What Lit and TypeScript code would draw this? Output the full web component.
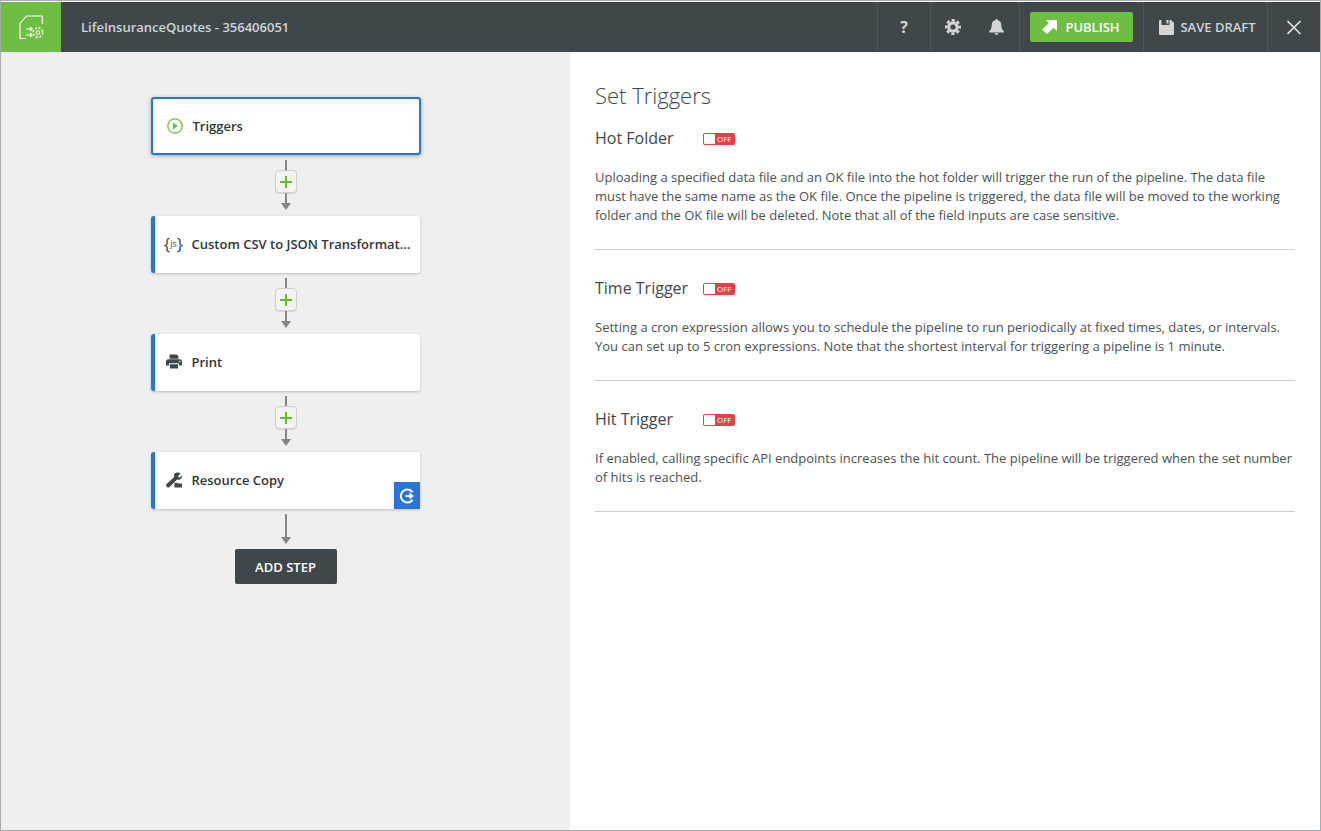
import { LitElement, html, css, svg } from "lit";
import { customElement } from "lit/decorators.js";

const steps = [
  { name: "Custom CSV to JSON Transformation", icon: "js" },
  { name: "Print", icon: "print" },
  { name: "Resource Copy", icon: "wrench", badge: true },
];

const sections = [
  {
    title: "Hot Folder",
    text: "Uploading a specified data file and an OK file into the hot folder will trigger the run of the pipeline. The data file must have the same name as the OK file. Once the pipeline is triggered, the data file will be moved to the working folder and the OK file will be deleted. Note that all of the field inputs are case sensitive.",
  },
  {
    title: "Time Trigger",
    text: "Setting a cron expression allows you to schedule the pipeline to run periodically at fixed times, dates, or intervals. You can set up to 5 cron expressions. Note that the shortest interval for triggering a pipeline is 1 minute.",
  },
  {
    title: "Hit Trigger",
    text: "If enabled, calling specific API endpoints increases the hit count. The pipeline will be triggered when the set number of hits is reached.",
  },
];

const icons: Record<string, any> = {
  print: svg`<svg width="16" height="15" viewBox="0 0 18 16"><path fill="#40474b" d="M4 0h8l2 2v3H4zM2.500 5.500h13A2.500 2.500 0 0 1 18 8v4.500h-3.500V10h-11v2.500H0V8a2.500 2.500 0 0 1 2.500-2.500zM4.500 11h9v5h-9z"/><circle cx="15.500" cy="8" r=".9" fill="#fff"/></svg>`,
  wrench: svg`<svg width="16" height="16" viewBox="0 0 18 17"><path fill="#40474b" d="M16.500 1.200 13.700 4l.5 1.400 1.500.4 2.200-2.400c.3 2-.6 3.800-2.400 4.500-1.100.4-2.100.3-3-.1L4 16.300c-.8.800-2 .8-2.800 0L.7 15.800c-.8-.8-.8-2 0-2.800L9.300 5c-.4-1-.4-2.100.1-3.200C10.400-.2 14.600-.5 16.500 1.200z"/><path fill="#40474b" d="M9.500 11.500h3l1 1H18V17H9.500z"/></svg>`,
  js: html`<span class="js"><span class="brace">{</span><span class="jsname">js</span><span class="brace">}</span></span>`,
};

@customElement("app-root")
export class AppRoot extends LitElement {
  static styles = css`
    :host {
      display: block;
      height: 831px;
      font-family: "Open Sans", "Liberation Sans", sans-serif;
      color: #40474b;
    }
    .frame {
      box-sizing: border-box;
      height: 831px;
      border: 1px solid #a9acae;
      display: flex;
      flex-direction: column;
      background: #fff;
    }
    header {
      height: 50px;
      margin-top: 1px;
      flex: none;
      background: #40474b;
      display: flex;
      align-items: stretch;
      color: #cdd5da;
    }
    .logo {
      width: 60px;
      background: #6fbe44;
      display: flex;
      align-items: center;
      justify-content: center;
    }
    .app-title {
      flex: 1;
      padding-left: 20px;
      font-size: 13px;
      font-weight: 600;
      line-height: 50px;
    }
    .cell {
      border-left: 1px solid #50575b;
      display: flex;
      align-items: center;
      justify-content: center;
      box-sizing: border-box;
    }
    .help {
      width: 53px;
      font-size: 16px;
      font-weight: 700;
      color: #d4d4d4;
    }
    .tools {
      width: 89px;
      gap: 28px;
      padding-right: 1px;
    }
    .pub-cell {
      width: 124px;
    }
    .publish {
      width: 103px;
      height: 30px;
      background: #6fbe44;
      border-radius: 2px;
      color: #fff;
      font-size: 13px;
      font-weight: 600;
      display: flex;
      align-items: center;
      justify-content: center;
      gap: 8px;
      padding-right: 1px;
      box-sizing: border-box;
    }
    .draft {
      width: 124px;
      gap: 6px;
      padding-left: 4px;
      font-size: 13px;
      font-weight: 600;
      color: #cdd5da;
    }
    .close {
      width: 53px;
    }
    main {
      flex: 1;
      display: flex;
      min-height: 0;
    }
    .flow {
      width: 569px;
      flex: none;
      box-sizing: border-box;
      background: #efefef;
      padding-top: 45px;
      display: flex;
      flex-direction: column;
      align-items: center;
    }
    .card {
      box-sizing: border-box;
      width: 269px;
      height: 57px;
      margin: 1px 1px 0 0;
      background: #fff;
      border-radius: 3px;
      border-left: 4px solid #2b74d6;
      box-shadow: 0 1px 3px rgba(0, 0, 0, 0.22);
      display: flex;
      align-items: center;
      padding: 0 7px 2px 10px;
      position: relative;
      font-size: 13px;
      font-weight: 600;
      color: #2f3538;
    }
    .card.active {
      width: 270px;
      height: 58px;
      margin: 0;
      border: 2px solid #2b74d6;
      padding: 0 7px 0 13px;
      box-shadow: 0 1px 4px rgba(0, 0, 0, 0.3);
    }
    .ico {
      width: 18px;
      flex: none;
      margin-right: 9px;
      display: flex;
      justify-content: center;
    }
    .name {
      overflow: hidden;
      white-space: nowrap;
      text-overflow: ellipsis;
      min-width: 0;
    }
    .js {
      display: flex;
      align-items: center;
      color: #40474b;
      font-weight: 400;
    }
    .brace {
      font-size: 17px;
      font-weight: 400;
      line-height: 18px;
    }
    .jsname {
      font-size: 9px;
      line-height: 18px;
    }
    .badge {
      position: absolute;
      right: 0;
      bottom: 0;
      width: 26px;
      height: 27px;
      background: #2b74d6;
      display: flex;
      align-items: center;
      justify-content: center;
    }
    .link {
      height: 60px;
      box-sizing: border-box;
      padding: 5px 0;
      display: flex;
      flex-direction: column;
      align-items: center;
    }
    .link.last {
      height: 40px;
    }
    .line {
      width: 2px;
      background: #858585;
      flex: 1;
    }
    .head {
      width: 0;
      height: 0;
      border-left: 5px solid transparent;
      border-right: 5px solid transparent;
      border-top: 7px solid #858585;
    }
    .add {
      box-sizing: border-box;
      width: 22px;
      height: 23px;
      flex: none;
      background: #f3f3f3;
      border: 1px solid #cfcfcf;
      border-radius: 4px;
      box-shadow: 0 1px 1px rgba(0, 0, 0, 0.1);
      display: flex;
      align-items: center;
      justify-content: center;
    }
    .add-step {
      width: 102px;
      height: 35px;
      background: #40474b;
      border-radius: 2px;
      color: #fff;
      font-size: 13px;
      font-weight: 600;
      display: flex;
      align-items: center;
      justify-content: center;
    }
    .panel {
      flex: 1;
      padding: 0 25px;
    }
    h1 {
      margin: 0 0 15px;
      padding-top: 27px;
      font-size: 22px;
      font-weight: 300;
      line-height: 32px;
      color: #40474b;
    }
    section {
      border-bottom: 1px solid #cfcfcf;
      padding-bottom: 24px;
      margin-bottom: 26px;
    }
    .sec-head {
      display: flex;
      align-items: center;
      height: 24px;
      margin-bottom: 18px;
    }
    h2 {
      margin: 0;
      font-size: 16px;
      font-weight: 400;
      line-height: 24px;
      width: 108px;
      color: #40474b;
    }
    .toggle {
      box-sizing: border-box;
      width: 32px;
      height: 12px;
      background: #e5404a;
      border-radius: 2px;
      padding: 1px;
      display: flex;
      align-items: center;
      margin-top: 1px;
    }
    .knob {
      width: 11px;
      height: 10px;
      background: #fff;
      border-radius: 1px;
    }
    .off {
      color: #fff;
      font-size: 8px;
      font-weight: 400;
      line-height: 10px;
      margin-left: 2px;
    }
    p {
      margin: 0;
      font-size: 13px;
      line-height: 19px;
      color: #4a5155;
    }
  `;

  connector(last = false) {
    return html`<div class="link ${last ? "last" : ""}">
      <div class="line"></div>
      ${last
        ? ""
        : html`<div class="add">
              <svg width="12" height="12" viewBox="0 0 12 12"><path fill="#6cb52d" d="M5 0h2v5h5v2H7v5H5V7H0V5h5z" /></svg>
            </div>
            <div class="line"></div>`}
      <div class="head"></div>
    </div>`;
  }

  render() {
    return html`<div class="frame">
      <header>
        <div class="logo">
          <svg width="26" height="26" viewBox="0 0 26 26" fill="none" stroke="#fff">
            <path stroke-width="1.100" d="M8 24.500H2V9.500L8.500 2H24.300v8" />
            <path stroke-width="1.100" d="M8 15h6M12 13l2.200 2-2.200 2M8 21h6M12 19l2.200 2-2.200 2" />
            <circle cx="20" cy="18.500" r="1.800" stroke-width="1.100" />
            <circle cx="20" cy="18.500" r="4.700" stroke-width="1.500" stroke-dasharray="2 1.690" />
          </svg>
        </div>
        <div class="app-title">LifeInsuranceQuotes - 356406051</div>
        <div class="cell help">?</div>
        <div class="cell tools">
          <svg width="16" height="16" viewBox="0 0 16 16" fill="none" stroke="#d4d4d4">
            <circle cx="8" cy="8" r="4.200" stroke-width="3.200" />
            <circle cx="8" cy="8" r="6.700" stroke-width="2.600" stroke-dasharray="3.200 2.060" stroke-dashoffset="1.600" />
          </svg>
          <svg width="15" height="16" viewBox="0 0 15 16"><path fill="#d4d4d4" d="M7.500 0c.7 0 1.100.5 1.100 1.200 2.400.4 3.700 2.200 3.700 4.800 0 3.200.9 4.900 2.700 6.400v1H0v-1c1.800-1.500 2.700-3.200 2.700-6.400 0-2.600 1.300-4.400 3.700-4.800C6.400.5 6.800 0 7.500 0zM5.500 14.300h4c0 1-.9 1.700-2 1.700s-2-.7-2-1.700z" /></svg>
        </div>
        <div class="cell pub-cell">
          <div class="publish">
            <svg width="15" height="14" viewBox="0 0 15 14"><path fill="#fff" d="M4 0h11v11l-3.500-3.200L5 14 0 9.500l6.800-6.200z" /></svg>
            PUBLISH
          </div>
        </div>
        <div class="cell draft">
          <svg width="15" height="15" viewBox="0 0 15 15"><path fill="#d4d4d4" d="M1 0h1.500v5h8V0H12l3 3v11a1 1 0 0 1-1 1H1a1 1 0 0 1-1-1V1a1 1 0 0 1 1-1zM7.500 0h2v3.500h-2z" /></svg>
          SAVE DRAFT
        </div>
        <div class="cell close">
          <svg width="15" height="15" viewBox="0 0 15 15"><path stroke="#e4e4e4" stroke-width="1.600" d="M.5 1l13 13M13.500 1L.5 14" /></svg>
        </div>
      </header>
      <main>
        <div class="flow">
          <div class="card active">
            <span class="ico">
              <svg width="16" height="16" viewBox="0 0 16 16"><circle cx="8" cy="8" r="7.200" fill="none" stroke="#6fbe44" stroke-width="1.300" /><path fill="#6fbe44" d="M6 4.500 11 8l-5 3.500z" /></svg>
            </span>
            <span class="name">Triggers</span>
          </div>
          ${steps.map(
            (s) => html`${this.connector()}
              <div class="card">
                <span class="ico">${icons[s.icon]}</span>
                <span class="name">${s.name}</span>
                ${s.badge
                  ? html`<div class="badge">
                      <svg width="16" height="16" viewBox="0 0 16 16" fill="none">
                        <path stroke="#fff" stroke-width="2" d="M13.600 4.200A6.500 6.500 0 1 0 13.600 11.800" />
                        <path fill="#fff" d="M6.500 7h4V4.500L15 8l-4.500 3.500V9h-4z" />
                      </svg>
                    </div>`
                  : ""}
              </div>`
          )}
          ${this.connector(true)}
          <div class="add-step">ADD STEP</div>
        </div>
        <div class="panel">
          <h1>Set Triggers</h1>
          ${sections.map(
            (s) => html`<section>
              <div class="sec-head">
                <h2>${s.title}</h2>
                <div class="toggle"><div class="knob"></div><span class="off">OFF</span></div>
              </div>
              <p>${s.text}</p>
            </section>`
          )}
        </div>
      </main>
    </div>`;
  }
}
